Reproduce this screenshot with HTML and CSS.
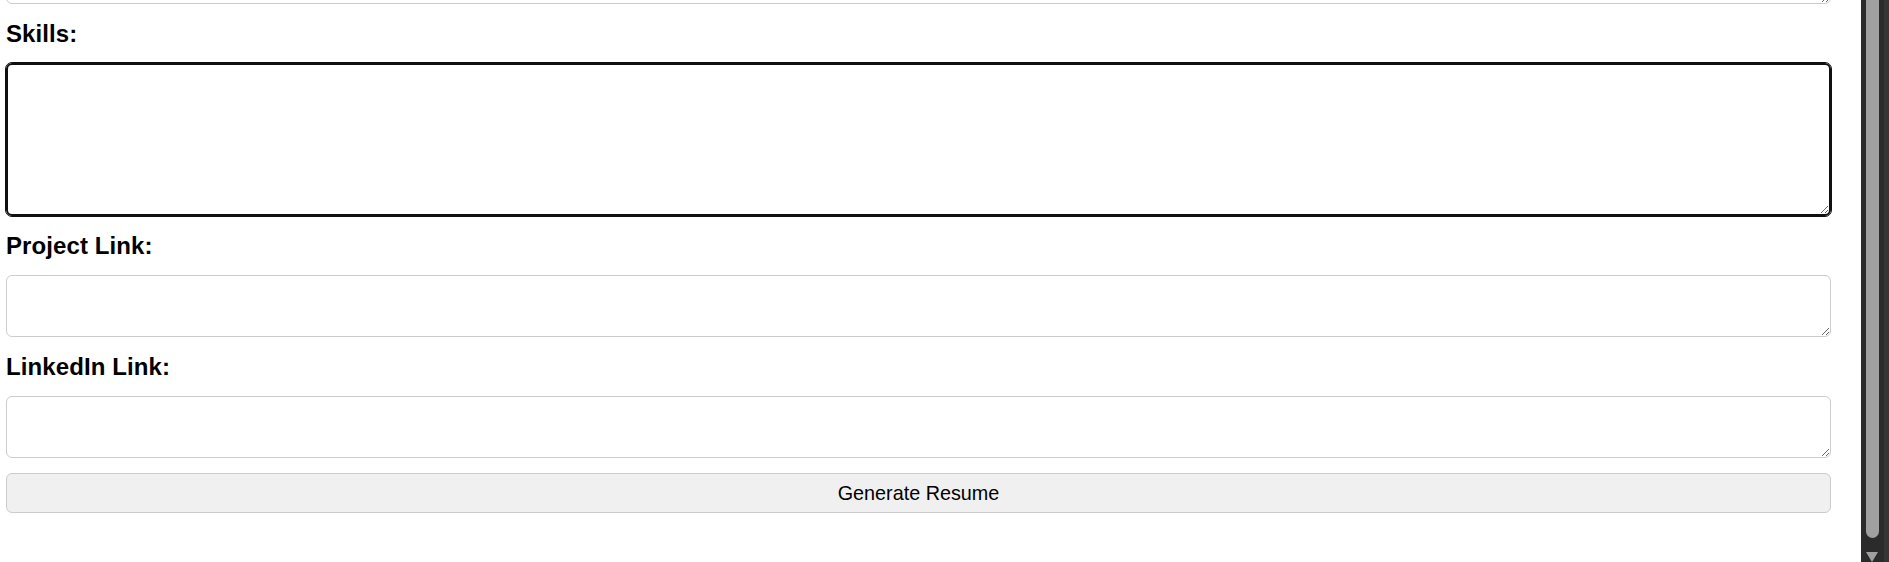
FILE: index.html
```html
<!DOCTYPE html>
<html lang="en">
<head>
<meta charset="utf-8">
<title>Resume Form</title>
<link rel="stylesheet" href="styles.css">
</head>
<body>
<div class="page">
  <form class="form">
    <textarea class="field field-prev" aria-label="Previous field"></textarea>
    <label class="field-label" for="skills">Skills:</label>
    <textarea class="field field-tall field-focus" id="skills"></textarea>
    <label class="field-label" for="project">Project Link:</label>
    <textarea class="field" id="project"></textarea>
    <label class="field-label" for="linkedin">LinkedIn Link:</label>
    <textarea class="field" id="linkedin"></textarea>
    <button type="button" class="generate">Generate Resume</button>
  </form>
</div>
<div class="scrollbar">
  <div class="track">
    <div class="thumb"></div>
    <div class="arrow"></div>
  </div>
  <div class="edge"></div>
</div>
</body>
</html>
```
FILE: styles.css
```css
html, body {
  margin: 0;
  padding: 0;
  background: #ffffff;
}

body {
  display: flex;
  height: 562px;
  overflow: hidden;
  font-family: "Liberation Sans", Arial, sans-serif;
  color: #000;
}

.page {
  flex: 1;
  overflow: hidden;
  padding-left: 6px;
}

.form {
  display: flex;
  flex-direction: column;
  width: 1825px;
}

.field {
  box-sizing: border-box;
  display: block;
  width: 1825px;
  height: 62px;
  margin: 0;
  padding: 6px;
  border: 1px solid #cccccc;
  border-radius: 6px;
  background: #fff;
  font-family: "Liberation Sans", Arial, sans-serif;
  font-size: 19px;
  resize: vertical;
}

.field-prev {
  margin-top: -58px;
}

.field-tall {
  height: 153px;
}

.field-focus {
  border: 2px solid #101010;
  outline: 1px solid #101010;
  outline-offset: 0;
}

.field-label {
  display: block;
  margin: 16px 0 15px;
  font-weight: bold;
  font-size: 24px;
  line-height: 28px;
  letter-spacing: 0.1px;
}

.generate {
  box-sizing: border-box;
  display: block;
  width: 1825px;
  height: 40px;
  margin-top: 15px;
  padding: 0;
  border: 1px solid #cccccc;
  border-radius: 6px;
  background: #f0f0f0;
  color: #000;
  font-family: "Liberation Sans", Arial, sans-serif;
  font-size: 19.8px;
}

.scrollbar {
  width: 28px;
  flex: none;
  display: flex;
  height: 562px;
}

.track {
  width: 23px;
  box-sizing: border-box;
  padding-left: 5px;
  background: #2b2b2b;
  display: flex;
  flex-direction: column;
}

.thumb {
  width: 13px;
  height: 538px;
  background: #a0a0a0;
  border-radius: 0 0 7px 7px;
}

.arrow {
  width: 0;
  height: 0;
  margin-top: 14px;
  border-left: 6.5px solid transparent;
  border-right: 6.5px solid transparent;
  border-top: 10px solid #a0a0a0;
}

.edge {
  width: 5px;
  background: #363636;
}
```
